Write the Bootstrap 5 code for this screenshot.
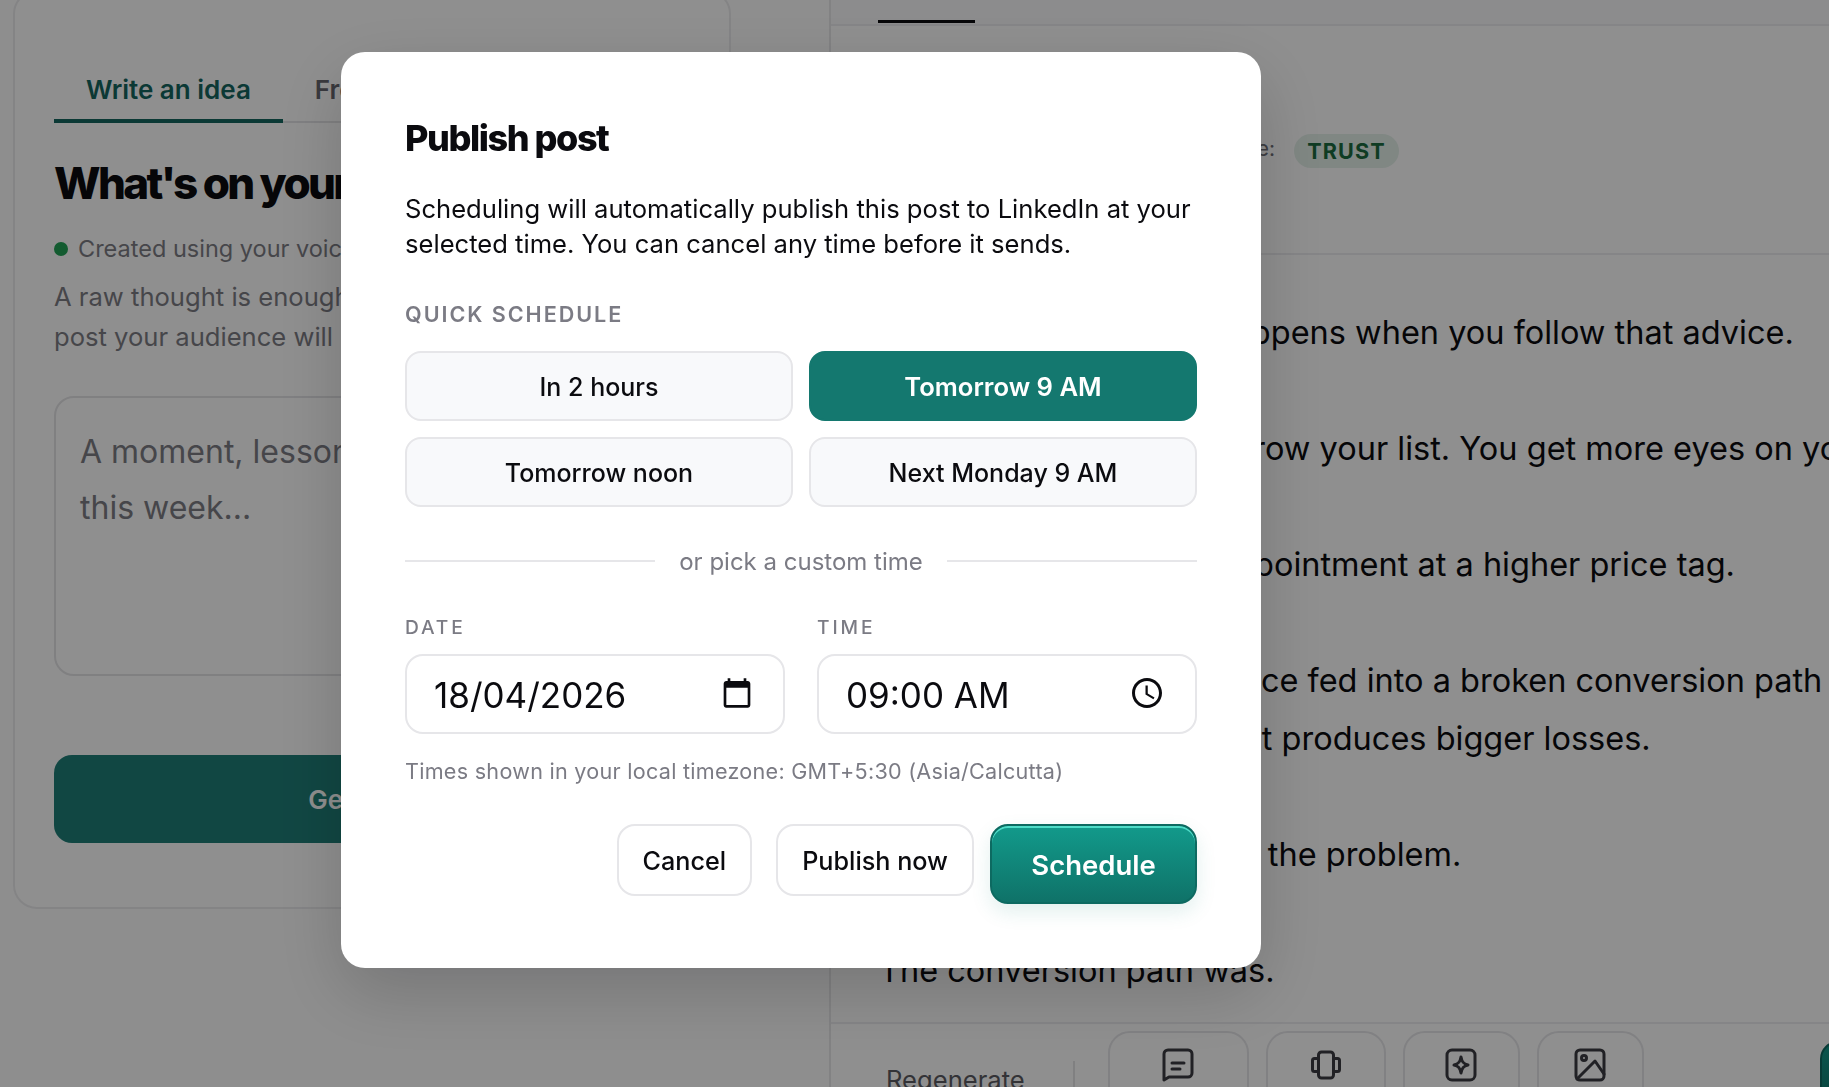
<!DOCTYPE html>
<html lang="en">
<head>
  <meta charset="UTF-8">
  <title>Publish post</title>
  <meta name="viewport" content="width=device-width, initial-scale=1" />
  <link href="https://cdn.jsdelivr.net/npm/bootstrap@5.3.0/dist/css/bootstrap.min.css" rel="stylesheet" />
  <style>
    html, body {
      height: 100%;
      overflow: hidden;
    }

    body {
      margin: 0;
      background-color: #ffffff;
      font-family: Inter, "Liberation Sans", sans-serif;
      color: #0b0b0f;
    }

    /* page behind the dialog */
    .app-shell {
      height: 100vh;
      overflow: hidden;
    }

    .left-col {
      width: 829px;
      flex: none;
      background-color: #fdfdfe;
    }

    .idea-panel {
      width: 718px;
      height: 919px;
      margin: -10px 0 0 13px;
      padding: 76px 39px 0;
      border: 2px solid #ececee;
      border-radius: 24px;
      background-color: #ffffff;
    }

    .idea-tabs {
      height: 55px;
      border-bottom: 2px solid #e4e4e7;
    }

    .idea-tab {
      height: 55px;
      padding: 2px 32px 0;
      font-size: 26px;
      font-weight: 600;
      color: #66666e;
      white-space: nowrap;
    }

    .idea-tab.is-on {
      color: #14665f;
      border-bottom: 4px solid #14665f;
    }

    .idea-title {
      margin: 32px 0 0;
      font-size: 44px;
      line-height: 56px;
      font-weight: 800;
      letter-spacing: -0.06em;
      white-space: nowrap;
    }

    .voice-line {
      margin-top: 22px;
      gap: 10px;
      font-size: 23.500px;
      line-height: 32px;
      color: #7d7d85;
      white-space: nowrap;
    }

    .voice-dot {
      width: 14px;
      height: 14px;
      border-radius: 50%;
      background-color: #22a356;
    }

    .idea-help {
      margin: 12px 0 0;
      font-size: 25.600px;
      line-height: 40px;
      color: #7d7d85;
      white-space: nowrap;
    }

    .idea-input {
      height: 280px;
      margin-top: 39px;
      padding: 26px 24px;
      border: 2px solid #e4e4e7;
      border-radius: 20px;
      font-size: 32px;
      line-height: 56px;
      color: #7d7d85;
    }

    .generate-btn {
      height: 88px;
      margin-top: 79px;
      padding-left: 0;
      border: 0;
      border-radius: 18px;
      background-color: #1f7f78;
      color: #ffffff;
      font-size: 26px;
      font-weight: 600;
    }

    .draft-col {
      border-left: 2px solid #e8e8ea;
      background-color: #ffffff;
      min-width: 0;
    }

    .draft-tabbar {
      height: 26px;
      flex: none;
      border-bottom: 2px solid #ededf0;
      background-color: #fafafb;
    }

    .draft-tabline {
      width: 97px;
      height: 3px;
      margin: 20px 0 0 47px;
      background-color: #0b0b0f;
    }

    .draft-head {
      height: 229px;
      flex: none;
      padding: 108px 0 0 46px;
      border-bottom: 2px solid #ededf0;
    }

    .tone-label {
      width: 398px;
      margin-right: 19px;
      text-align: right;
      font-size: 21px;
      line-height: 30px;
      color: #6e6e76;
      white-space: nowrap;
    }

    .tone-pill {
      width: 105px;
      height: 34px;
      border-radius: 17px;
      background-color: #e4f1ea;
      color: #1b6b3f;
      font-size: 21.600px;
      font-weight: 700;
      letter-spacing: 0.05em;
    }

    .draft-body {
      flex: 1 1 auto;
      min-height: 0;
      overflow: hidden;
      padding: 49px 0 0 48px;
      font-size: 32.500px;
      line-height: 58px;
      white-space: nowrap;
    }

    .draft-body p {
      margin: 0 0 58px;
    }

    .draft-foot {
      height: 65px;
      flex: none;
      padding-top: 7px;
      border-top: 2px solid #ededf0;
      white-space: nowrap;
    }

    .regen-text {
      margin-left: 55px;
      padding-right: 48px;
      font-size: 25.600px;
      color: #5c5c63;
      border-right: 2px solid #e4e4e7;
    }

    .tool-btn {
      height: 98px;
      flex: none;
      padding-top: 15px;
      border: 2px solid #e6e6e9;
      border-radius: 22px;
      background-color: #ffffff;
      text-align: center;
      color: #3c3c42;
    }

    .tool-chat { width: 141px; margin-left: 33px; }
    .tool-swipe { width: 120px; margin-left: 17px; }
    .tool-spark { width: 117px; margin-left: 17px; }
    .tool-photo { width: 107px; margin-left: 17px; }

    .post-btn {
      width: 150px;
      height: 76px;
      flex: none;
      margin: 10px 0 0 176px;
      border: 2px solid #0d6a61;
      border-radius: 18px;
      background: linear-gradient(180deg, #129a8b, #0f7268);
    }

    /* dialog */
    .publish-modal {
      --bs-modal-width: 920px;
      --bs-modal-margin: 0;
      overflow: hidden;
    }

    .modal-backdrop.publish-shade {
      --bs-backdrop-opacity: 0.44;
    }

    .publish-modal .publish-dialog {
      margin: 52px 0 0 341px;
    }

    .publish-box {
      height: 916px;
      padding: 64px;
      border: 0;
      border-radius: 24px;
      box-shadow: 0 24px 70px rgba(0, 0, 0, 0.18);
      color: #0b0b0f;
    }

    .publish-title {
      margin: 0 0 31px;
      font-size: 36px;
      line-height: 44px;
      font-weight: 800;
      letter-spacing: -0.04em;
    }

    .publish-copy {
      margin: 0 0 38px;
      font-size: 25.600px;
      line-height: 35px;
    }

    .quick-label {
      margin-bottom: 23px;
      padding-top: 1px;
      font-size: 21.600px;
      line-height: 28px;
      font-weight: 600;
      letter-spacing: 0.09em;
      color: #7b7b84;
    }

    .quick-grid {
      display: grid;
      grid-template-columns: 1fr 1fr;
      gap: 16px;
    }

    .quick-btn {
      height: 70px;
      padding-top: 10px;
      border: 2px solid #e6e6e9;
      border-radius: 16px;
      background-color: #f8f9fb;
      color: #0b0b0f;
      font-size: 25px;
      font-weight: 500;
    }

    .quick-btn.is-on {
      padding-top: 8px;
      border-color: #14786f;
      background-color: #14786f;
      color: #ffffff;
      font-size: 25.600px;
      font-weight: 600;
    }

    .or-line {
      margin-top: 39px;
      height: 30px;
      gap: 24px;
      font-size: 24px;
      line-height: 30px;
      color: #7b7b84;
    }

    .or-text {
      padding-top: 1px;
    }

    .or-rule {
      flex: 1 1 0;
      height: 2px;
      background-color: #e6e6e9;
    }

    .field-row {
      display: grid;
      grid-template-columns: 380px 380px;
      gap: 32px;
      margin-top: 37px;
    }

    .field-label {
      margin-bottom: 14px;
      padding-top: 1px;
      font-size: 19.200px;
      line-height: 26px;
      font-weight: 500;
      letter-spacing: 0.15em;
      color: #7b7b84;
    }

    .field-box {
      height: 80px;
      padding: 2px 30px 0 27px;
      border: 2px solid #e6e6e9;
      border-radius: 18px;
      font-size: 35px;
      color: #0b0b0f;
    }

    .field-icon {
      margin-top: -4px;
    }

    .tz-note {
      margin: 23px 0 0;
      font-size: 21.600px;
      line-height: 28px;
      letter-spacing: 0.012em;
      color: #7b7b84;
    }

    .publish-actions {
      margin-top: 39px;
    }

    .ghost-btn {
      height: 72px;
      margin-left: 24px;
      padding: 3px 24px 0;
      border: 2px solid #e6e6e9;
      border-radius: 18px;
      background-color: #ffffff;
      color: #0b0b0f;
      font-size: 25.200px;
      font-weight: 500;
    }

    .schedule-btn {
      width: 207px;
      height: 80px;
      margin-left: 16px;
      padding-top: 9px;
      border: 2px solid #0d6a61;
      border-radius: 18px;
      background: linear-gradient(180deg, #129a8b, #0f7268);
      box-shadow: inset 0 2px 0 #4fdcc8, 0 8px 20px rgba(15, 130, 118, 0.12);
      color: #ffffff;
      font-size: 27.500px;
      font-weight: 600;
    }
  </style>
</head>
<body>
  <div class="app-shell d-flex">
    <div class="left-col">
      <div class="idea-panel">
        <div class="idea-tabs d-flex">
          <div class="idea-tab is-on">Write an idea</div>
          <div class="idea-tab">From a link</div>
        </div>
        <h2 class="idea-title">What's on your mind?</h2>
        <div class="voice-line d-flex align-items-center">
          <span class="voice-dot"></span>
          <span>Created using your voice profile</span>
        </div>
        <p class="idea-help">A raw thought is enough. We will shape it into a<br>post your audience will read.</p>
        <div class="idea-input">A moment, lesson or opinion from<br>this week...</div>
        <button class="generate-btn btn w-100" type="button">Generate</button>
      </div>
    </div>

    <div class="draft-col d-flex flex-column flex-grow-1">
      <div class="draft-tabbar"><div class="draft-tabline"></div></div>
      <div class="draft-head d-flex align-items-start">
        <span class="tone-label">Post type:</span>
        <span class="tone-pill d-flex align-items-center justify-content-center">TRUST</span>
      </div>
      <div class="draft-body">
        <p>OK, let's look at what happens when you follow that advice.</p>
        <p>More traffic may really grow your list. You get more eyes on your offer.</p>
        <p>Then it's the same disappointment at a higher price tag.</p>
        <p>Add in even more audience fed into a broken conversion path<br>It really only means that it produces bigger losses.</p>
        <p>Traffic source was never the problem.</p>
        <p>The conversion path was.</p>
      </div>
      <div class="draft-foot d-flex align-items-start">
        <div class="d-flex align-items-center tool-row">
          <span class="regen-text">Regenerate</span>
          <div class="tool-btn tool-chat">
            <svg width="34" height="34" viewBox="0 0 34 34" fill="none" stroke="currentColor" stroke-width="3" stroke-linecap="round" stroke-linejoin="round"><path d="M3 32V6a4 4 0 0 1 4-4h20a4 4 0 0 1 4 4v19a4 4 0 0 1-4 4H8z"/><path d="M11 15h12M11 21h8"/></svg>
          </div>
          <div class="tool-btn tool-swipe">
            <svg width="34" height="34" viewBox="0 0 34 34" fill="none" stroke="currentColor" stroke-width="3" stroke-linecap="round" stroke-linejoin="round"><rect x="9.500" y="4" width="15" height="26" rx="3"/><path d="M9.500 10.500H5.500a2 2 0 0 0-2 2v9a2 2 0 0 0 2 2h4M24.500 10.500h4a2 2 0 0 1 2 2v9a2 2 0 0 1-2 2h-4"/></svg>
          </div>
          <div class="tool-btn tool-spark">
            <svg width="34" height="34" viewBox="0 0 34 34" fill="none" stroke="currentColor" stroke-width="3" stroke-linecap="round" stroke-linejoin="round"><rect x="3" y="2" width="28" height="30" rx="5"/><path d="M17 9c.8 5 2.500 7 7 8-4.500 1-6.200 3-7 8-.8-5-2.500-7-7-8 4.500-1 6.200-3 7-8z"/></svg>
          </div>
          <div class="tool-btn tool-photo">
            <svg width="34" height="34" viewBox="0 0 34 34" fill="none" stroke="currentColor" stroke-width="3" stroke-linecap="round" stroke-linejoin="round"><rect x="3" y="2" width="28" height="30" rx="4"/><circle cx="11" cy="10" r="2.500"/><path d="M4 31l18-18 9 13"/></svg>
          </div>
        </div>
        <div class="post-btn"></div>
      </div>
    </div>
  </div>

  <div class="modal-backdrop publish-shade show"></div>
  <div class="modal publish-modal d-block" tabindex="-1" role="dialog" aria-modal="true">
    <div class="modal-dialog publish-dialog">
      <div class="modal-content publish-box">
        <h5 class="publish-title">Publish post</h5>
        <p class="publish-copy">Scheduling will automatically publish this post to LinkedIn at your selected time. You can cancel any time before it sends.</p>

        <div class="quick-label">QUICK SCHEDULE</div>
        <div class="quick-grid">
          <button class="btn quick-btn" type="button">In 2 hours</button>
          <button class="btn quick-btn is-on" type="button">Tomorrow 9 AM</button>
          <button class="btn quick-btn" type="button">Tomorrow noon</button>
          <button class="btn quick-btn" type="button">Next Monday 9 AM</button>
        </div>

        <div class="or-line d-flex align-items-center">
          <span class="or-rule"></span>
          <span class="or-text">or pick a custom time</span>
          <span class="or-rule"></span>
        </div>

        <div class="field-row">
          <div>
            <div class="field-label">DATE</div>
            <div class="field-box d-flex align-items-center justify-content-between">
              <span>18/04/2026</span>
              <svg class="field-icon" width="32" height="32" viewBox="0 0 24 24" fill="#0b0b0f"><path d="M20 3h-1V1h-2v2H7V1H5v2H4c-1.100 0-2 .9-2 2v16c0 1.100.9 2 2 2h16c1.100 0 2-.9 2-2V5c0-1.100-.9-2-2-2zm0 18H4V8h16v13z"/></svg>
            </div>
          </div>
          <div>
            <div class="field-label">TIME</div>
            <div class="field-box d-flex align-items-center justify-content-between">
              <span>09:00 AM</span>
              <svg class="field-icon" width="36" height="36" viewBox="0 0 24 24" fill="#0b0b0f"><path d="M11.990 2C6.470 2 2 6.480 2 12s4.470 10 9.990 10C17.520 22 22 17.520 22 12S17.520 2 11.990 2zM12 20c-4.420 0-8-3.580-8-8s3.580-8 8-8 8 3.580 8 8-3.580 8-8 8zm.5-13H11v6l5.250 3.150.75-1.230-4.500-2.670z"/></svg>
            </div>
          </div>
        </div>

        <p class="tz-note">Times shown in your local timezone: GMT+5:30 (Asia/Calcutta)</p>

        <div class="publish-actions d-flex justify-content-end align-items-start">
          <button class="btn ghost-btn" type="button">Cancel</button>
          <button class="btn ghost-btn" type="button">Publish now</button>
          <button class="btn schedule-btn" type="button">Schedule</button>
        </div>
      </div>
    </div>
  </div>

  <script src="https://cdn.jsdelivr.net/npm/bootstrap@5.3.0/dist/js/bootstrap.bundle.min.js"></script>
</body>
</html>
